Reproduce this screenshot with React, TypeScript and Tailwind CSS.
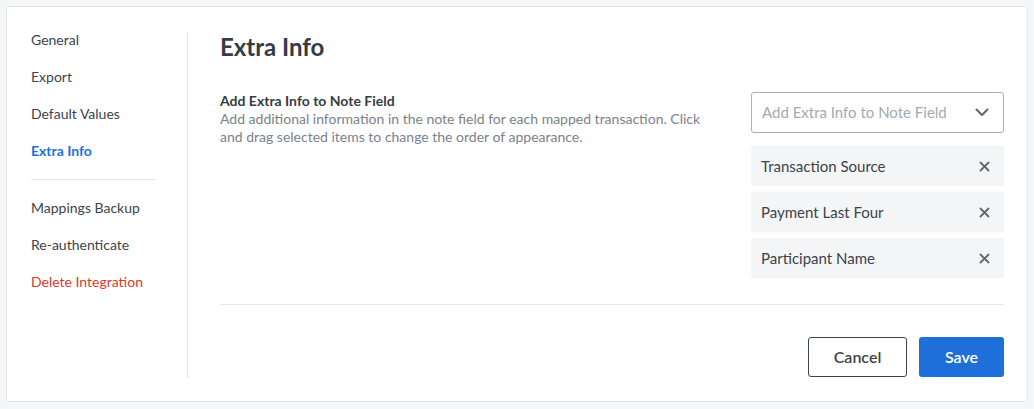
import React from "react";

const font = { fontFamily: "Lato, 'Open Sans', sans-serif" };

function XIcon() {
  return (
    <svg width="11" height="11" viewBox="0 0 11 11" fill="none" stroke="#5f6670" strokeWidth="1.8" strokeLinecap="round">
      <path d="M1.5 1.5 L9.5 9.5 M9.5 1.5 L1.5 9.5" />
    </svg>
  );
}

function Chevron() {
  return (
    <svg width="14" height="9" viewBox="0 0 14 9" fill="none" stroke="#5f6670" strokeWidth="2" strokeLinecap="round" strokeLinejoin="round">
      <path d="M1.5 1.5 L7 7 L12.5 1.5" />
    </svg>
  );
}

export default function App() {
  const chips = ["Transaction Source", "Payment Last Four", "Participant Name"];
  return (
    <div className="w-[1034px] h-[409px] bg-[#f5f6f8] pt-[6px] pl-[6px]" style={font}>
      <div className="w-[1022px] h-[396px] bg-white border border-[#e4e6e9] rounded-[3px] flex pl-[24px] pr-[23px] pt-[24px] pb-[23px]">
        <div className="w-[157px] border-r border-[#e4e6e9] flex flex-col text-[14px] leading-[20px] text-[#3d434b]">
          <div className="flex flex-col gap-[17px] -mt-px">
            <div>General</div>
            <div>Export</div>
            <div>Default Values</div>
            <div className="font-bold text-[#1f6fdb]">Extra Info</div>
          </div>
          <div className="w-[124px] h-px bg-[#e4e6e9] mt-[18px] mb-[18px]"></div>
          <div className="flex flex-col gap-[17px]">
            <div>Mappings Backup</div>
            <div>Re-authenticate</div>
            <div className="text-[#d9392e]">Delete Integration</div>
          </div>
        </div>
        <div className="flex-1 pl-[32px] flex flex-col">
          <h1 className="text-[24px] leading-[32px] font-bold text-[#363c44]">Extra Info</h1>
          <div className="mt-[29px] flex justify-between">
            <div className="w-[488px]">
              <div className="text-[14px] leading-[18px] font-bold text-[#363c44]">Add Extra Info to Note Field</div>
              <div className="text-[14px] leading-[18px] text-[#7b828b]">
                Add additional information in the note field for each mapped transaction. Click and drag selected items to change the order of appearance.
              </div>
            </div>
            <div className="w-[253px] flex flex-col">
              <div className="h-[41px] border border-[#a9afb6] rounded-[3px] flex items-center justify-between pl-[10px] pr-[14px] text-[15px] text-[#a4aab1]">
                <span>Add Extra Info to Note Field</span>
                <Chevron />
              </div>
              <div className="mt-[13px] flex flex-col gap-[6px]">
                {chips.map((c) => (
                  <div key={c} className="h-[40px] bg-[#f4f5f7] rounded-[3px] flex items-center justify-between pl-[10px] pr-[14px] text-[15px] text-[#3d434b]">
                    <span>{c}</span>
                    <XIcon />
                  </div>
                ))}
              </div>
            </div>
          </div>
          <div className="mt-[26px] h-px bg-[#e4e6e9]"></div>
          <div className="mt-[32px] flex justify-end gap-[12px]">
            <button className="w-[99px] h-[40px] border border-[#3d434b] rounded-[3px] text-[16px] font-semibold text-[#3d434b]">Cancel</button>
            <button className="w-[85px] h-[40px] bg-[#1f6fdb] rounded-[3px] text-[16px] font-semibold text-white">Save</button>
          </div>
        </div>
      </div>
    </div>
  );
}
